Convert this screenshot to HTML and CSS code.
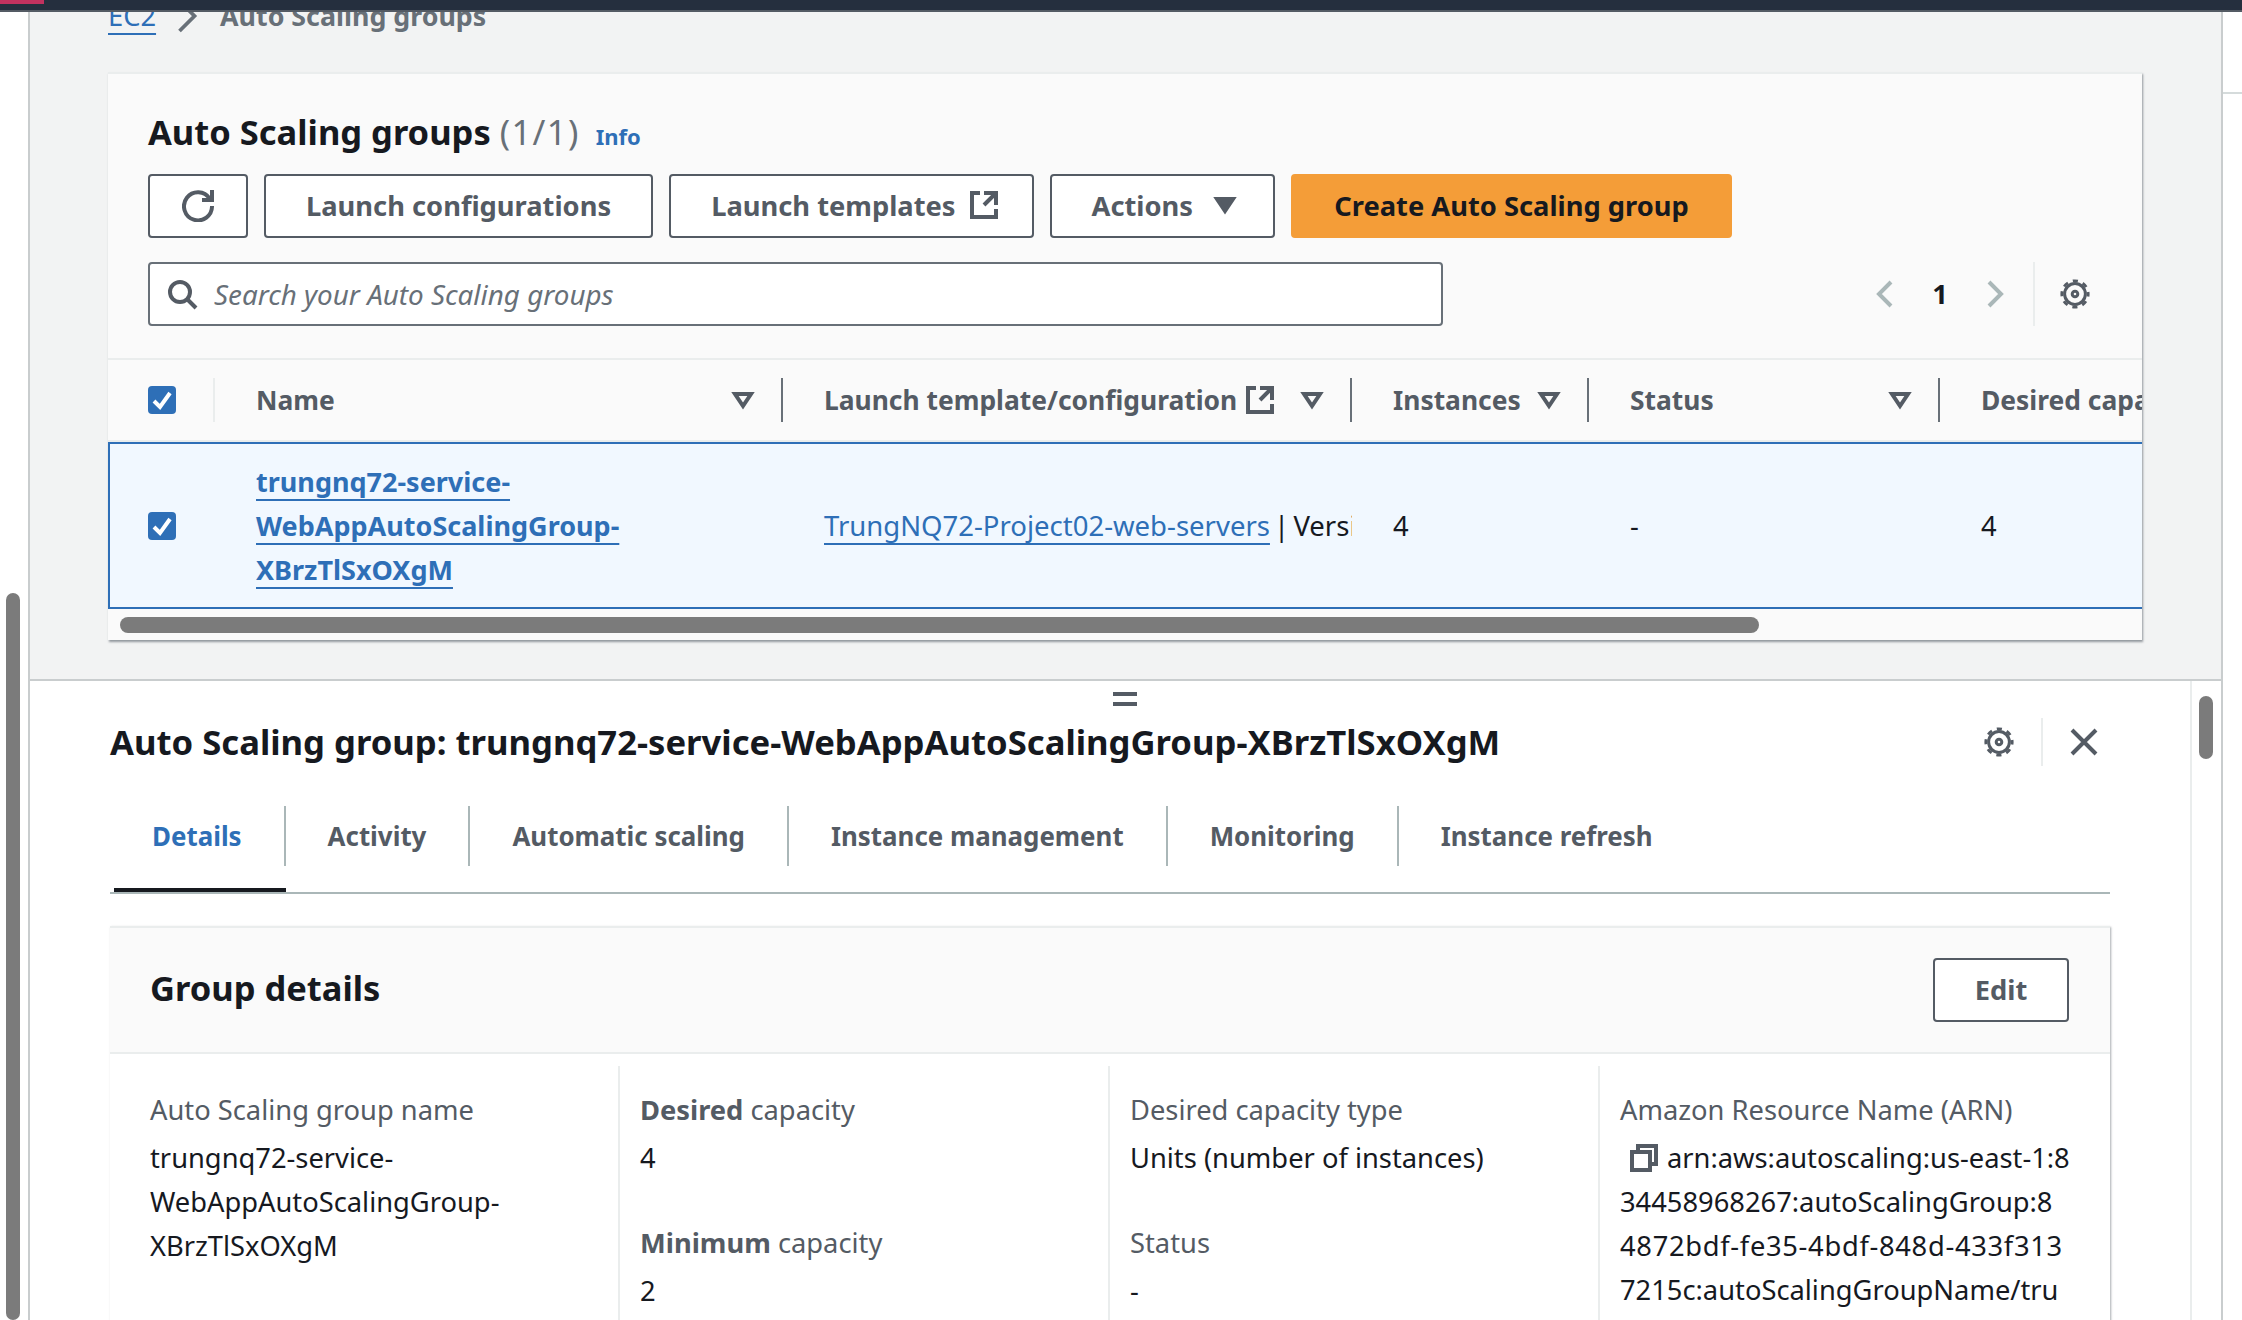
FILE: index.html
```html
<!DOCTYPE html>
<html lang="en">
<head>
    <meta charset="UTF-8">
    <title>Auto Scaling groups</title>
    <link rel="stylesheet" href="styles.css">
</head>
<body>

    <svg class="sprite" xmlns="http://www.w3.org/2000/svg">
      <symbol id="i-refresh" viewBox="0 0 16 16"><path d="M10 5h5V0"/><path d="M15 8a7 7 0 1 1-1.14-3.67"/></symbol>
      <symbol id="i-external" viewBox="0 0 16 16"><path d="M14 8V2H8M14 2 8 8M6 2H2v12h12v-4"/></symbol>
      <symbol id="i-caret" viewBox="0 0 16 16"><path class="solid" d="M4 5h8l-4 6-4-6z"/></symbol>
      <symbol id="i-filter" viewBox="0 0 16 16"><path d="M4 5h8l-4 6-4-6z"/></symbol>
      <symbol id="i-search" viewBox="0 0 16 16"><circle cx="7" cy="7" r="5"/><path d="m15 15-4.5-4.5"/></symbol>
      <symbol id="i-prev" viewBox="0 0 16 16"><path d="M11 2 5 8l6 6"/></symbol>
      <symbol id="i-next" viewBox="0 0 16 16"><path d="m5 2 6 6-6 6"/></symbol>
      <symbol id="i-gear" viewBox="0 0 16 16"><circle class="gear-line" cx="8" cy="8" r="1.4"/><circle class="gear-line" cx="8" cy="8" r="5.2"/><circle class="teeth" cx="8" cy="8" r="6.6"/></symbol>
      <symbol id="i-close" viewBox="0 0 16 16"><path d="m2 2 12 12M14 2 2 14"/></symbol>
      <symbol id="i-copy" viewBox="0 0 16 16"><path d="M2 5h9v9H2z"/><path d="M5 5V2h9v9h-3"/></symbol>
      <symbol id="i-check" viewBox="0 0 14 14"><path d="m3 7.5 3 3 5-7"/></symbol>
    </svg>

    <header class="topbar"><span class="topbar-mark"></span></header>

    <div class="shell">
      <div class="side-left"><div class="page-thumb"></div></div>

      <div class="workspace">
        <main class="content">
          <nav class="crumbs">
            <a class="link" href="#">EC2</a>
            <svg class="icon crumb-sep"><use href="#i-next"/></svg>
            <span class="crumb-current">Auto Scaling groups</span>
          </nav>

          <section class="card">
            <div class="card-title">
              <h1>Auto Scaling groups <span class="count">(1/1)</span></h1>
              <a class="info" href="#">Info</a>
            </div>

            <div class="actions">
              <button class="btn btn-icon"><svg class="icon"><use href="#i-refresh"/></svg></button>
              <button class="btn">Launch configurations</button>
              <button class="btn btn-trail">Launch templates <svg class="icon btn-ext"><use href="#i-external"/></svg></button>
              <button class="btn btn-trail">Actions <svg class="icon"><use href="#i-caret"/></svg></button>
              <button class="btn btn-primary">Create Auto Scaling group</button>
            </div>

            <div class="filter-row">
              <div class="search">
                <svg class="icon"><use href="#i-search"/></svg>
                <span>Search your Auto Scaling groups</span>
              </div>
              <div class="pager">
                <svg class="icon muted"><use href="#i-prev"/></svg>
                <span class="page-num">1</span>
                <svg class="icon muted"><use href="#i-next"/></svg>
              </div>
              <div class="pager-settings"><svg class="icon"><use href="#i-gear"/></svg></div>
            </div>

            <div class="table-wrap">
              <table>
                <colgroup>
                  <col class="col-check">
                  <col class="col-name">
                  <col class="col-template">
                  <col class="col-instances">
                  <col class="col-status">
                  <col class="col-desired">
                </colgroup>
                <thead>
                  <tr>
                    <th><div class="th th-check"><span class="checkbox"><svg><use href="#i-check"/></svg></span></div></th>
                    <th><div class="th">Name <svg class="icon"><use href="#i-filter"/></svg></div></th>
                    <th><div class="th">Launch template/configuration <svg class="icon ext"><use href="#i-external"/></svg><svg class="icon"><use href="#i-filter"/></svg></div></th>
                    <th><div class="th">Instances <svg class="icon"><use href="#i-filter"/></svg></div></th>
                    <th><div class="th">Status <svg class="icon"><use href="#i-filter"/></svg></div></th>
                    <th><div class="th">Desired capacity <svg class="icon"><use href="#i-filter"/></svg></div></th>
                  </tr>
                </thead>
                <tbody>
                  <tr class="selected">
                    <td class="td-check"><span class="checkbox"><svg><use href="#i-check"/></svg></span></td>
                    <td><a class="link link-strong" href="#">trungnq72-service-<br>WebAppAutoScalingGroup-<br>XBrzTlSxOXgM</a></td>
                    <td class="td-template"><a class="link" href="#">TrungNQ72-Project02-web-servers</a> | Version Default</td>
                    <td>4</td>
                    <td>-</td>
                    <td>4</td>
                  </tr>
                </tbody>
              </table>
            </div>

            <div class="hscroll"><div class="hscroll-thumb"></div></div>
          </section>
        </main>

        <section class="split">
          <div class="split-handle"></div>

          <div class="split-body">
            <div class="split-head">
              <h2>Auto Scaling group: trungnq72-service-WebAppAutoScalingGroup-XBrzTlSxOXgM</h2>
              <svg class="icon"><use href="#i-gear"/></svg>
              <span class="split-sep"></span>
              <svg class="icon"><use href="#i-close"/></svg>
            </div>

            <div class="tabs">
              <a class="tab active" href="#"><span>Details</span></a>
              <a class="tab" href="#"><span>Activity</span></a>
              <a class="tab" href="#"><span>Automatic scaling</span></a>
              <a class="tab" href="#"><span>Instance management</span></a>
              <a class="tab" href="#"><span>Monitoring</span></a>
              <a class="tab" href="#"><span>Instance refresh</span></a>
            </div>

            <section class="details">
              <div class="details-head">
                <h3>Group details</h3>
                <button class="btn btn-edit">Edit</button>
              </div>
              <div class="details-grid">
                <div class="details-col">
                  <div class="kv">
                    <div class="kv-label">Auto Scaling group name</div>
                    <div class="kv-value">trungnq72-service-<br>WebAppAutoScalingGroup-<br>XBrzTlSxOXgM</div>
                  </div>
                  <div class="kv">
                    <div class="kv-label">Date created</div>
                  </div>
                </div>
                <div class="details-col">
                  <div class="kv">
                    <div class="kv-label"><b>Desired</b> capacity</div>
                    <div class="kv-value">4</div>
                  </div>
                  <div class="kv">
                    <div class="kv-label"><b>Minimum</b> capacity</div>
                    <div class="kv-value">2</div>
                  </div>
                </div>
                <div class="details-col">
                  <div class="kv">
                    <div class="kv-label">Desired capacity type</div>
                    <div class="kv-value">Units (number of instances)</div>
                  </div>
                  <div class="kv">
                    <div class="kv-label">Status</div>
                    <div class="kv-value">-</div>
                  </div>
                </div>
                <div class="details-col">
                  <div class="kv">
                    <div class="kv-label">Amazon Resource Name (ARN)</div>
                    <div class="kv-value arn"><svg class="icon copy"><use href="#i-copy"/></svg>arn:aws:autoscaling:us-east-1:8<br>34458968267:autoScalingGroup:8<br><span class="arn-digits">4872bdf-fe35-4bdf-848d-433f313</span><br>7215c:autoScalingGroupName/tru</div>
                  </div>
                </div>
              </div>
            </section>
          </div>

          <div class="split-scroll"><div class="split-thumb"></div></div>
        </section>
      </div>

      <div class="side-right"><div class="side-right-top"></div></div>
    </div>

</body>
</html>
```

FILE: styles.css
```css
body {
    margin: 0;
    height: 1320px;
    overflow: hidden;
    background-color: #fff;
    color: #16191f;
    font-family: "Noto Sans", "Open Sans", sans-serif;
    font-size: 27.3px;
    line-height: 44px;
}

.sprite {
    display: none;
}

h1, h2, h3 {
    margin: 0;
    font-size: 34.5px;
    line-height: 48px;
    font-weight: 700;
}

/* icons: all Polaris-style outlines on a 16 unit box */
.icon {
    width: 32px;
    height: 32px;
    flex: none;
    fill: none;
    stroke: #545b64;
    stroke-width: 2;
    color: #545b64;
}

.icon.muted {
    stroke: #aab7b8;
}

.solid {
    fill: #545b64;
}

.gear-line {
    stroke-width: 1.5;
}

.teeth {
    stroke-width: 1.4;
    stroke-dasharray: 2.6 2.58;
    stroke-dashoffset: 1.3;
}

.link {
    color: #2e6fb7;
    text-decoration: underline;
    text-decoration-thickness: 2px;
    text-underline-offset: 7px;
}

.link-strong {
    font-size: 27px;
    font-weight: 700;
}

/* top bar */
.topbar {
    height: 10px;
    background-color: #252f3e;
    border-bottom: 2px solid #545b64;
}

.topbar-mark {
    display: block;
    width: 44px;
    height: 4px;
    background-color: #c2325f;
}

.shell {
    display: flex;
    height: 1308px;
    overflow: hidden;
}

.side-left {
    width: 28px;
    flex: none;
    border-right: 2px solid #c9cdce;
}

.page-thumb {
    width: 14px;
    height: 727px;
    margin: 581px 0 0 6px;
    background-color: #7b7b7b;
    border-radius: 7px;
}

.workspace {
    width: 2191px;
    flex: none;
    border-right: 2px solid #c9cdce;
}

.side-right {
    flex: 1;
}

.side-right-top {
    height: 80px;
    border-bottom: 2px solid #d5dbdb;
}

/* upper part */
.content {
    height: 667px;
    padding: 0 78px;
    box-sizing: border-box;
    background-color: #f2f3f3;
    overflow: hidden;
}

.crumbs {
    display: flex;
    align-items: center;
    height: 44px;
    margin-top: -18px;
    margin-bottom: 34px;
}

.crumb-sep {
    width: 40px;
    height: 40px;
    margin: 0 13px 0 11px;
    stroke: #687078;
    stroke-width: 1.5;
}

.crumb-current {
    color: #687078;
    font-weight: 700;
    font-size: 26.8px;
}

.card {
    width: 2034px;
    height: 568px;
    box-sizing: border-box;
    background-color: #fafafa;
    border-top: 2px solid #eaeded;
    box-shadow: 1px 2px 2px rgba(84, 91, 100, 0.6);
}

.card-title {
    display: flex;
    align-items: baseline;
    gap: 16px;
    padding: 34px 0 0 40px;
    height: 66px;
}

.count {
    color: #687078;
    font-weight: 400;
    letter-spacing: 1.4px;
}

.info {
    color: #2e6fb7;
    font-size: 22px;
    font-weight: 700;
    text-decoration: none;
}

.actions {
    display: flex;
    gap: 16px;
    padding: 0 0 0 40px;
}

.btn {
    display: inline-flex;
    align-items: center;
    justify-content: center;
    gap: 16px;
    height: 64px;
    padding: 0 40px 2px;
    box-sizing: border-box;
    background-color: #fff;
    border: 2px solid #545b64;
    border-radius: 4px;
    color: #545b64;
    font-family: inherit;
    font-size: 27.3px;
    font-weight: 700;
    white-space: nowrap;
}

.btn-icon {
    width: 100px;
    padding: 0;
}

.btn-trail {
    padding-right: 32px;
}

.btn-ext {
    margin-left: -4px;
}

.btn-primary {
    width: 441px;
    padding: 0 0 2px;
    background-color: #f49d38;
    border-color: #f49d38;
    color: #16191f;
}

.filter-row {
    display: flex;
    align-items: center;
    height: 64px;
    margin-top: 24px;
    padding-left: 40px;
}

.search {
    display: flex;
    align-items: center;
    gap: 16px;
    width: 1295px;
    height: 64px;
    padding-left: 16px;
    box-sizing: border-box;
    background-color: #fff;
    border: 2px solid #687078;
    border-radius: 4px;
    color: #687078;
    font-size: 27.8px;
    font-style: italic;
}

.pager {
    display: flex;
    align-items: center;
    margin-left: 426px;
    width: 142px;
    justify-content: space-between;
}

.page-num {
    font-weight: 700;
}

.pager-settings {
    display: flex;
    align-items: center;
    height: 64px;
    margin-left: 22px;
    padding-left: 24px;
    border-left: 2px solid #eaeded;
}

/* table */
.table-wrap {
    overflow: hidden;
    margin-top: 32px;
    border-top: 2px solid #eaeded;
}

table {
    width: 2232px;
    table-layout: fixed;
    border-collapse: separate;
    border-spacing: 0;
}

.col-check { width: 107px; }
.col-name { width: 568px; }
.col-template { width: 569px; }
.col-instances { width: 237px; }
.col-status { width: 351px; }
.col-desired { width: 400px; }

th {
    height: 80px;
    padding: 0;
    border-bottom: 2px solid #eaeded;
    color: #545b64;
    font-size: 26.4px;
    font-weight: 700;
    text-align: left;
}

.th {
    display: flex;
    align-items: center;
    justify-content: space-between;
    height: 44px;
    padding: 0 22px 0 41px;
    border-right: 2px solid #687078;
    white-space: nowrap;
}

.th-check {
    justify-content: flex-start;
    padding: 0 0 0 40px;
    border-right-color: #eaeded;
}

.th .ext {
    margin: 0 auto 0 7px;
}

.checkbox {
    display: block;
    width: 28px;
    height: 28px;
    background-color: #2e6fb7;
    border-radius: 4px;
}

.checkbox svg {
    display: block;
    width: 28px;
    height: 28px;
    fill: none;
    stroke: #fff;
    stroke-width: 2;
}

td {
    padding: 16px 0 15px 41px;
    overflow: hidden;
    white-space: nowrap;
    background-color: #f1f8ff;
    border-top: 2px solid #2e6fb7;
    border-bottom: 2px solid #2e6fb7;
}

.td-check {
    padding-left: 38px;
    border-left: 2px solid #2e6fb7;
}

.td-template {
    font-size: 27.5px;
    word-spacing: -3px;
}

.hscroll {
    padding: 8px 0 0 12px;
}

.hscroll-thumb {
    width: 1639px;
    height: 16px;
    background-color: #7b7b7b;
    border-radius: 8px;
}

/* split panel */
.split {
    position: relative;
    display: flex;
    height: 641px;
    overflow: hidden;
    border-top: 2px solid #c9cdce;
}

.split-handle {
    position: absolute;
    top: 11px;
    left: 1083px;
    width: 24px;
    height: 6px;
    border-top: 4px solid #545b64;
    border-bottom: 4px solid #545b64;
}

.split-body {
    width: 2000px;
    flex: none;
    padding: 37px 0 0 80px;
}

.split-head {
    display: flex;
    align-items: center;
    height: 48px;
}

.split-head h2 {
    flex: 1;
    font-size: 34.65px;
    white-space: nowrap;
}

.split-sep {
    width: 2px;
    height: 48px;
    margin: 0 25px 0 26px;
    background-color: #eaeded;
}

.split-head .icon:last-child {
    margin-right: 10px;
}

.split-scroll {
    flex: 1;
    margin-left: 80px;
    border-left: 2px solid #eaeded;
}

.split-thumb {
    width: 14px;
    height: 63px;
    margin: 15px 0 0 7px;
    background-color: #7b7b7b;
    border-radius: 7px;
}

.tabs {
    display: flex;
    margin-top: 40px;
    padding-left: 4px;
    border-bottom: 2px solid #aab7b8;
}

.tab {
    padding-bottom: 22px;
    border-bottom: 4px solid transparent;
    color: #545b64;
    font-size: 25.9px;
    font-weight: 700;
    text-decoration: none;
}

.tab span {
    display: block;
    height: 60px;
    line-height: 60px;
    padding: 0 42px;
    border-right: 2px solid #aab7b8;
}

.tab:last-child span {
    border-right: 0;
}

.tab.active {
    color: #2e6fb7;
    border-bottom-color: #16191f;
}

.tab.active span {
    padding-left: 38px;
}

.details {
    margin-top: 32px;
    border-top: 2px solid #eaeded;
    box-shadow: 1px 1px 2px rgba(84, 91, 100, 0.5);
}

.details-head {
    display: flex;
    align-items: center;
    justify-content: space-between;
    height: 126px;
    box-sizing: border-box;
    padding: 0 41px 1px 40px;
    background-color: #fafafa;
    border-bottom: 2px solid #eaeded;
}

.details-head h3 {
    margin-bottom: 4px;
}

.btn-edit {
    width: 136px;
    padding: 0;
}

.details-grid {
    display: grid;
    grid-template-columns: 510px 490px 490px 1fr;
    margin-top: 12px;
}

.details-col {
    padding: 22px 0 0 20px;
    border-right: 2px solid #eaeded;
}

.details-col:first-child {
    padding-left: 40px;
}

.details-col:first-child .kv {
    margin-bottom: 43px;
}

.details-col:last-child {
    border-right: 0;
}

.kv {
    margin-bottom: 41px;
}

.kv-label {
    margin-bottom: 4px;
    color: #545b64;
}

.arn {
    white-space: nowrap;
}

.arn-digits {
    letter-spacing: 0.7px;
}

.copy {
    margin: 0 7px 0 8px;
    vertical-align: -6px;
}
```
